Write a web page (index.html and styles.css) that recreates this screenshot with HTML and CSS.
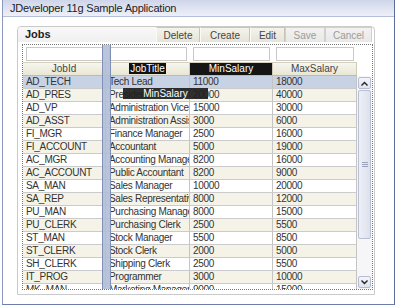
FILE: index.html
```html
<!DOCTYPE html>
<html lang="en">
<head>
    <meta charset="UTF-8">
    <title>JDeveloper 11g Sample Application</title>
    <link rel="stylesheet" href="styles.css">
</head>
<body>
    <div class="window">
        <div class="titlebar">JDeveloper 11g Sample Application</div>
        <div class="content">
            <div class="panel">
                <div class="panel-head">
                    <div class="tab">Jobs</div>
                    <div class="toolbar">
                        <button class="tb-btn btn-delete">Delete</button>
                        <button class="tb-btn btn-create">Create</button>
                        <button class="tb-btn btn-edit">Edit</button>
                        <button class="tb-btn btn-save" disabled>Save</button>
                        <button class="tb-btn btn-cancel" disabled>Cancel</button>
                    </div>
                </div>
                <div class="panel-body">
                    <div class="table-frame">
                        <div class="filter-row">
                            <div class="filter-cell"><input class="filter-input" type="text"></div>
                            <div class="filter-cell"><input class="filter-input" type="text"></div>
                            <div class="filter-cell"><input class="filter-input" type="text"></div>
                            <div class="filter-cell"><input class="filter-input" type="text"></div>
                        </div>
                        <div class="header-row">
                            <div class="head-cell">JobId</div>
                            <div class="head-cell"><span class="head-selected">JobTitle</span></div>
                            <div class="head-cell head-active">MinSalary</div>
                            <div class="head-cell">MaxSalary</div>
                        </div>
                        <div class="data-area">
                            <div class="rows">
                                <div class="row row-selected"><div class="cell">AD_TECH</div><div class="cell">Tech Lead</div><div class="cell">11000</div><div class="cell">18000</div></div>
                                <div class="row row-alt"><div class="cell">AD_PRES</div><div class="cell">President</div><div class="cell">20000</div><div class="cell">40000</div></div>
                                <div class="row"><div class="cell">AD_VP</div><div class="cell">Administration Vice President</div><div class="cell">15000</div><div class="cell">30000</div></div>
                                <div class="row row-alt"><div class="cell">AD_ASST</div><div class="cell">Administration Assistant</div><div class="cell">3000</div><div class="cell">6000</div></div>
                                <div class="row"><div class="cell">FI_MGR</div><div class="cell">Finance Manager</div><div class="cell">2500</div><div class="cell">16000</div></div>
                                <div class="row row-alt"><div class="cell">FI_ACCOUNT</div><div class="cell">Accountant</div><div class="cell">5000</div><div class="cell">19000</div></div>
                                <div class="row"><div class="cell">AC_MGR</div><div class="cell">Accounting Manager</div><div class="cell">8200</div><div class="cell">16000</div></div>
                                <div class="row row-alt"><div class="cell">AC_ACCOUNT</div><div class="cell">Public Accountant</div><div class="cell">8200</div><div class="cell">9000</div></div>
                                <div class="row"><div class="cell">SA_MAN</div><div class="cell">Sales Manager</div><div class="cell">10000</div><div class="cell">20000</div></div>
                                <div class="row row-alt"><div class="cell">SA_REP</div><div class="cell">Sales Representative</div><div class="cell">8000</div><div class="cell">12000</div></div>
                                <div class="row"><div class="cell">PU_MAN</div><div class="cell">Purchasing Manager</div><div class="cell">8000</div><div class="cell">15000</div></div>
                                <div class="row row-alt"><div class="cell">PU_CLERK</div><div class="cell">Purchasing Clerk</div><div class="cell">2500</div><div class="cell">5500</div></div>
                                <div class="row"><div class="cell">ST_MAN</div><div class="cell">Stock Manager</div><div class="cell">5500</div><div class="cell">8500</div></div>
                                <div class="row row-alt"><div class="cell">ST_CLERK</div><div class="cell">Stock Clerk</div><div class="cell">2000</div><div class="cell">5000</div></div>
                                <div class="row"><div class="cell">SH_CLERK</div><div class="cell">Shipping Clerk</div><div class="cell">2500</div><div class="cell">5500</div></div>
                                <div class="row row-alt"><div class="cell">IT_PROG</div><div class="cell">Programmer</div><div class="cell">3000</div><div class="cell">10000</div></div>
                                <div class="row"><div class="cell">MK_MAN</div><div class="cell">Marketing Manager</div><div class="cell">9000</div><div class="cell">15000</div></div>
                            </div>
                            <div class="scrollbar">
                                <div class="sb-btn">
                                    <svg width="7" height="5" viewBox="0 0 7 5"><path d="M0.5 4.5 L3.5 1.5 L6.5 4.5" fill="none" stroke="#222" stroke-width="1.4"/></svg>
                                </div>
                                <div class="sb-track">
                                    <div class="sb-thumb"><span class="sb-grip"></span></div>
                                </div>
                                <div class="sb-btn">
                                    <svg width="7" height="5" viewBox="0 0 7 5"><path d="M0.5 0.5 L3.5 3.5 L6.5 0.5" fill="none" stroke="#222" stroke-width="1.4"/></svg>
                                </div>
                            </div>
                        </div>
                        <!-- drag feedback while moving the MinSalary column -->
                        <div class="drop-marker"></div>
                        <div class="drag-ghost">MinSalary</div>
                    </div>
                </div>
            </div>
        </div>
    </div>
</body>
</html>
```

FILE: styles.css
```css
body {
    margin: 0;
    background-color: white;
    font-family: "Liberation Sans", Arial, sans-serif;
    color: #333;
}
.window {
    margin-left: 2px;
    width: 393px;
    height: 305px;
    box-sizing: border-box;
    border-left: 1px solid #8c99bd;
    border-right: 1px solid #5d6d9c;
    border-bottom: 1px solid #6f7ea8;
    background-color: white;
}
.titlebar {
    height: 17px;
    box-sizing: border-box;
    padding-left: 7px;
    line-height: 17px;
    font-size: 11px;
    letter-spacing: -0.2px;
    color: #222;
    background: linear-gradient(#cfd5ea, #eef0f8);
    border-bottom: 1px solid #b6bfd9;
}
.content {
    padding: 9px 0 0 14px;
}
.panel {
    width: 358px;
    height: 269px;
    box-sizing: border-box;
    border: 1px solid #cacaca;
    border-radius: 4px 4px 0 0;
    display: flex;
    flex-direction: column;
}
.panel-head {
    height: 15px;
    display: flex;
}
.tab {
    flex: 1;
    padding-left: 7px;
    font-size: 11px;
    font-weight: bold;
    line-height: 15px;
    color: #222;
    background: linear-gradient(#f8f8f8, #f0f0f0);
    border-radius: 4px 0 0 0;
}
.toolbar {
    display: flex;
    margin-right: 2px;
}
.tb-btn {
    height: 16px;
    padding: 0;
    margin: 0;
    font-family: "Liberation Sans", Arial, sans-serif;
    font-size: 10px;
    color: #444;
    background: linear-gradient(#f4f3ec, #e6e4d8);
    border: 1px solid #c8c5b5;
    border-left-color: #fbfaf5;
    text-align: center;
}
.tb-btn:disabled {
    color: #9c9c9c;
    background: linear-gradient(#f2f2f0, #e8e8e6);
    border-color: #d0d0d0;
}
.btn-delete { width: 44px; }
.btn-create { width: 50px; }
.btn-edit { width: 35px; }
.btn-save { width: 40px; }
.btn-cancel { width: 47px; }
.panel-body {
    flex: 1;
    padding: 2px 1px 3px 4px;
    background-color: white;
}
.table-frame {
    position: relative;
    height: 246px;
    box-sizing: border-box;
    border: 1px dotted #777;
    overflow: hidden;
    font-size: 10px;
}
.filter-row,
.header-row,
.row {
    display: grid;
    grid-template-columns: 83px 84px 83px 84px;
}
.filter-row {
    height: 17px;
}
.filter-cell {
    padding: 2px 3px 0 3px;
}
.filter-input {
    display: block;
    width: 100%;
    height: 14px;
    box-sizing: border-box;
    margin: 0;
    border: 1px solid #c9c9c9;
    background-color: white;
}
.header-row {
    height: 14px;
    box-sizing: border-box;
    width: 334px;
    border-top: 1px solid #d4d0bc;
    border-bottom: 1px solid #bfbba6;
    background: linear-gradient(#f7f6ee, #e9e6d3);
}
.head-cell {
    text-align: center;
    line-height: 12px;
    border-right: 1px solid #cfcbb8;
    color: #444;
}
.head-selected {
    background-color: #111;
    color: white;
    padding: 0 1px;
}
.head-active {
    background-color: #151515;
    color: white;
}
.data-area {
    display: flex;
    height: 213px;
}
.rows {
    width: 334px;
}
.row {
    height: 13px;
    box-sizing: border-box;
    border-bottom: 1px solid #cbcbcb;
    background-color: white;
}
.row-alt {
    background-color: #f5f3e8;
}
.row-selected {
    background-color: #c7d2e4;
}
.cell {
    padding-left: 3px;
    line-height: 12px;
    letter-spacing: -0.3px;
    white-space: nowrap;
    overflow: hidden;
    border-right: 1px solid #c4c4c4;
    color: #333;
}
.scrollbar {
    width: 15px;
    display: flex;
    flex-direction: column;
    padding: 1px;
    box-sizing: border-box;
    background-color: #f6f6f9;
}
.sb-btn {
    height: 12px;
    box-sizing: border-box;
    border: 1px solid #b6bdd0;
    border-radius: 2px;
    background: linear-gradient(#f3f5fa, #dfe3ee);
    display: flex;
    align-items: center;
    justify-content: center;
}
.sb-track {
    flex: 1;
    padding-top: 1px;
}
.sb-thumb {
    height: 149px;
    box-sizing: border-box;
    border: 1px solid #b9c0d3;
    border-radius: 2px;
    background: linear-gradient(90deg, #eef0f7, #dde1ec);
    display: flex;
    align-items: center;
    justify-content: center;
}
.sb-grip {
    width: 6px;
    height: 5px;
    border-top: 1px solid #9aa3ba;
    border-bottom: 1px solid #9aa3ba;
    box-sizing: border-box;
    background: linear-gradient(transparent 1px, #9aa3ba 1px, #9aa3ba 2px, transparent 2px);
}
.drop-marker {
    position: absolute;
    left: 79px;
    top: 0;
    bottom: 0;
    width: 9px;
    box-sizing: border-box;
    border-left: 1px solid #7f90b6;
    border-right: 1px solid #7f90b6;
    background-color: rgba(176, 189, 215, 0.88);
}
.drag-ghost {
    position: absolute;
    left: 100px;
    top: 43px;
    width: 85px;
    height: 11px;
    line-height: 11px;
    text-align: center;
    background-color: rgba(30, 30, 30, 0.92);
    color: white;
    font-size: 10px;
}
```
